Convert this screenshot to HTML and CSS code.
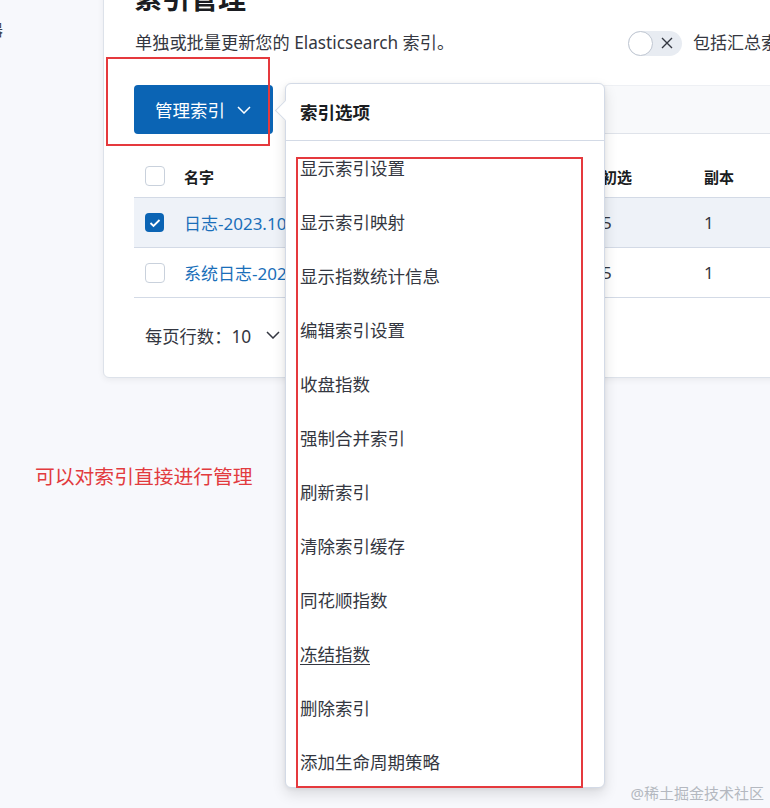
FILE: index.html
```html
<!DOCTYPE html>
<html lang="zh-CN">
<head>
    <meta charset="UTF-8">
    <meta name="viewport" content="width=device-width, initial-scale=1.0">
    <title>索引管理</title>
    <link rel="stylesheet" href="styles.css">
</head>
<body>
    <div class="page">
        <div class="sidebar"><span class="side-text">器</span></div>

        <div class="card">
            <h1 class="title">索引管理</h1>
            <div class="sub-row">
                <p class="subtitle">单独或批量更新您的 Elasticsearch 索引。</p>
                <div class="switch-group">
                    <span class="switch">
                        <span class="knob"></span>
                        <svg class="switch-x" width="12" height="12" viewBox="0 0 12 12"><path d="M1 1L11 11M11 1L1 11" stroke="#343741" stroke-width="1.4" fill="none"/></svg>
                    </span>
                    <span class="switch-label">包括汇总索引</span>
                </div>
            </div>

            <div class="toolbar">
                <button class="manage-btn">管理索引
                    <svg width="14" height="8" viewBox="0 0 14 8"><polyline points="1,1 7,7 13,1" stroke="#fff" stroke-width="1.5" fill="none"/></svg>
                </button>
                <div class="search-field"></div>

                <!-- 标注框 -->
                <div class="mark mark-btn"></div>

                <div class="popover">
                    <div class="popover-title">索引选项</div>
                    <ul class="menu">
                        <li>显示索引设置</li>
                        <li>显示索引映射</li>
                        <li>显示指数统计信息</li>
                        <li>编辑索引设置</li>
                        <li>收盘指数</li>
                        <li>强制合并索引</li>
                        <li>刷新索引</li>
                        <li>清除索引缓存</li>
                        <li>同花顺指数</li>
                        <li class="hover">冻结指数</li>
                        <li>删除索引</li>
                        <li>添加生命周期策略</li>
                    </ul>
                    <div class="mark mark-menu"></div>
                </div>
            </div>

            <div class="table">
                <div class="tr th">
                    <div class="td"><span class="checkbox"></span></div>
                    <div class="td">名字</div>
                    <div class="td">初选</div>
                    <div class="td">副本</div>
                </div>
                <div class="tr selected">
                    <div class="td"><span class="checkbox checked">
                        <svg width="12" height="10" viewBox="0 0 12 10"><polyline points="1.5,5 4.5,8 10.5,2" stroke="#fff" stroke-width="1.8" fill="none"/></svg>
                    </span></div>
                    <div class="td link">日志-2023.10.12</div>
                    <div class="td">5</div>
                    <div class="td">1</div>
                </div>
                <div class="tr">
                    <div class="td"><span class="checkbox"></span></div>
                    <div class="td link">系统日志-2023.10.12</div>
                    <div class="td">5</div>
                    <div class="td">1</div>
                </div>
            </div>

            <div class="pager">
                每页行数：10
                <svg width="14" height="8" viewBox="0 0 14 8"><polyline points="1,1 7,7 13,1" stroke="#343741" stroke-width="1.5" fill="none"/></svg>
            </div>
        </div>
    </div>

    <p class="note">可以对索引直接进行管理</p>

    <div class="watermark">@稀土掘金技术社区</div>
</body>
</html>
```

FILE: styles.css
```css
body, html {
    margin: 0;
    padding: 0;
}

body {
    position: relative;
    height: 808px;
    overflow: hidden;
    background-color: #f7f8fc;
    font-family: "Noto Sans", "Noto Sans CJK SC", sans-serif;
    color: #343741;
}

.page {
    display: flex;
    margin-top: -21px;
}

.sidebar {
    width: 103px;
    flex-shrink: 0;
    overflow: hidden;
}

.side-text {
    display: block;
    margin-top: 40px;
    margin-left: -13px;
    font-size: 16px;
    line-height: 22px;
    color: #3f4350;
}

.card {
    width: 661px;
    flex-shrink: 0;
    padding: 0 30px 18px 30px;
    background-color: #fff;
    border: 1px solid #dde2ea;
    border-radius: 0 0 6px 6px;
    box-shadow: 0 2px 6px rgba(0, 0, 0, 0.06);
}

.title {
    margin: 0;
    font-size: 28px;
    line-height: 36px;
    font-weight: bold;
    color: #1a1c21;
}

.sub-row {
    display: flex;
    justify-content: space-between;
    align-items: center;
    height: 30px;
    margin-top: 12px;
}

.subtitle {
    margin: 0 0 0 1px;
    font-size: 17.2px;
    line-height: 30px;
}

.switch-group {
    display: flex;
    align-items: center;
    gap: 11px;
}

.switch {
    position: relative;
    display: flex;
    align-items: center;
    width: 54px;
    height: 25px;
    border-radius: 13px;
    background-color: #e8ecf2;
}

.knob {
    width: 23px;
    height: 23px;
    border-radius: 50%;
    background-color: #fff;
    border: 1px solid #bfc6d1;
}

.switch-x {
    margin-left: 8px;
}

.switch-label {
    font-size: 17px;
    line-height: 30px;
}

.toolbar {
    position: relative;
    display: flex;
    gap: 16px;
    height: 49px;
    margin-top: 27px;
}

.manage-btn {
    display: flex;
    align-items: center;
    gap: 12px;
    width: 139px;
    height: 49px;
    padding: 0 0 0 21px;
    border: none;
    border-radius: 4px;
    background-color: #0b64b4;
    color: #fff;
    font-family: inherit;
    font-size: 17.5px;
}

.search-field {
    flex: 1;
    background-color: #f8f9fb;
    border-top: 1px solid #eef0f4;
    border-bottom: 1px solid #dfe3ea;
    box-sizing: border-box;
}

.popover {
    position: absolute;
    left: 151px;
    top: -2px;
    width: 318px;
    height: 703px;
    background-color: #fff;
    border: 1px solid #d3dae6;
    border-radius: 6px;
    box-shadow: 0 6px 14px rgba(0, 0, 0, 0.12), 0 1px 4px rgba(0, 0, 0, 0.06);
    z-index: 2;
}

/* 左侧小箭头 */
.popover::before {
    content: "";
    position: absolute;
    left: -8px;
    top: 19px;
    width: 14px;
    height: 14px;
    background-color: #fff;
    border-left: 1px solid #d3dae6;
    border-bottom: 1px solid #d3dae6;
    transform: rotate(45deg);
}

.popover-title {
    position: relative;
    height: 56px;
    padding-left: 14px;
    line-height: 56px;
    font-size: 17.5px;
    font-weight: bold;
    color: #1a1c21;
    border-bottom: 1px solid #d3dae6;
}

.menu {
    list-style: none;
    margin: 0;
    padding: 0;
}

.menu li {
    height: 54px;
    padding-left: 14px;
    line-height: 54px;
    font-size: 17.5px;
    color: #343741;
}

.menu li.hover {
    text-decoration: underline;
    text-underline-offset: 3px;
}

.mark {
    position: absolute;
    border: 2px solid #e5393d;
    box-sizing: border-box;
    pointer-events: none;
}

.mark-btn {
    left: -28px;
    top: -28px;
    width: 164px;
    height: 89px;
}

.mark-menu {
    left: 10px;
    top: 73px;
    width: 287px;
    height: 631px;
}

.table {
    margin-top: 21px;
}

.tr {
    display: grid;
    grid-template-columns: 50px 418px 101px 1fr;
    align-items: center;
    height: 50px;
    border-bottom: 1px solid #d3dae6;
    box-sizing: border-box;
    font-size: 17px;
}

.tr.th {
    height: 43px;
    font-size: 15px;
    font-weight: bold;
    color: #1a1c21;
}

.tr.selected {
    background-color: #eef2f8;
}

.td {
    display: flex;
    align-items: center;
}

.td:first-child {
    padding-left: 11px;
}

.tr .td:last-child {
    padding-left: 1px;
}

.td.link {
    color: #1a6fba;
}

.checkbox {
    display: flex;
    align-items: center;
    justify-content: center;
    width: 18px;
    height: 18px;
    border: 1px solid #c9d1dc;
    border-radius: 4px;
    background-color: #fff;
}

.checkbox.checked {
    width: 19px;
    height: 19px;
    border: none;
    background-color: #0b64b4;
}

.pager {
    display: flex;
    align-items: center;
    gap: 15px;
    height: 48px;
    margin-top: 13px;
    padding-left: 11px;
    font-size: 17.3px;
}

.note {
    margin: 86px 0 0 35px;
    font-size: 19.8px;
    line-height: 26px;
    color: #e23b3e;
}

.watermark {
    position: absolute;
    right: 6px;
    bottom: 5px;
    font-size: 15px;
    color: #b4b8c0;
}
```
